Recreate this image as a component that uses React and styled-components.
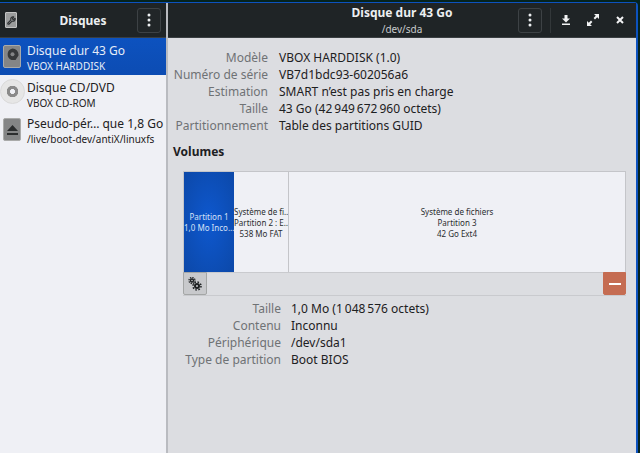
import React from 'react'
import styled, { createGlobalStyle } from 'styled-components'
import { Wrench } from 'lucide-react'

const GlobalStyle = createGlobalStyle`
  html, body {
    margin: 0;
    padding: 0;
    width: 640px;
    height: 453px;
    overflow: hidden;
    background: #05231e;
  }
  * { box-sizing: border-box; }
`

const Desktop = styled.div`
  width: 640px;
  height: 453px;
  padding: 2px 2px 0 0;
  background: #05231e;
`

const Window = styled.div`
  width: 638px;
  height: 451px;
  display: grid;
  grid-template-columns: 168px 1fr;
  border-top: 1px solid #0d52bf;
  border-right: 2px solid #0d52bf;
  border-radius: 0 4px 0 0;
  font-family: "Noto Sans", "Open Sans", sans-serif;
  font-size: 13px;
  color: #1d2022;
`

const Sidebar = styled.aside`
  background: #eff0f5;
  border-right: 2px solid #b9bbc0;
  display: flex;
  flex-direction: column;
`

const Main = styled.main`
  display: flex;
  flex-direction: column;
  background: #dcdde1;
`

const HeaderBar = styled.header`
  height: 35px;
  flex: none;
  background: #1f2426;
  border-bottom: 1px solid #3a3f42;
  color: #eceff1;
  display: grid;
  grid-template-columns: 1fr auto 1fr;
  align-items: center;
`

const HeaderSide = styled.div`
  display: flex;
  align-items: center;
  justify-content: ${p => p.$end ? 'flex-end' : 'flex-start'};
  padding: ${p => p.$pad};
`

const IconChip = styled.div`
  width: 12px;
  height: 16px;
  background: #9a9c9c;
  border: 1px solid #c2c3c3;
  border-radius: 1px;
  color: #2d3032;
  display: flex;
  align-items: center;
  justify-content: center;
`

const SideTitle = styled.div`
  font-size: 12px;
  font-weight: 700;
`

const MenuButton = styled.button`
  width: 24px;
  height: 25px;
  background: #212628;
  border: 1px solid #3d4245;
  border-radius: 3px;
  padding: 0;
  display: flex;
  align-items: center;
  justify-content: center;
`

const DiskRow = styled.div`
  height: 36.5px;
  padding: 4px 0 0 3px;
  display: flex;
  gap: 6px;
  background: ${p => p.$active ? 'linear-gradient(180deg, #0d52bf, #0c4cb3)' : 'transparent'};
  color: ${p => p.$active ? '#e6edf8' : '#1d2022'};
`

const DiskText = styled.div`
  min-width: 0;
  white-space: nowrap;
`

const DiskName = styled.div`
  font-size: 12px;
  line-height: 17px;
`

const DiskSub = styled.div`
  font-size: 10px;
  line-height: 14px;
`

const DiskIconBox = styled.div`
  width: 18px;
  height: 23px;
  margin-top: 3px;
  padding-top: ${p => p.$top}px;
  background: #848586;
  border: 1px solid #a9aaa9;
  border-radius: 2px;
  flex: none;
  display: flex;
  align-items: flex-start;
  justify-content: center;
`

const CdIcon = styled.div`
  width: 25px;
  height: 25px;
  margin: 0 -4px 0 -3px;
  flex: none;
  border-radius: 50%;
  background: radial-gradient(circle, #eff0f5 0 2.2px, #8a8a8a 2.8px 5.5px, #e6e6e6 6px);
  border: 1px solid #d9d9d9;
`

const TitleBlock = styled.div`
  text-align: center;
`

const WinTitle = styled.div`
  font-size: 12px;
  font-weight: 700;
  line-height: 16px;
  margin-bottom: 2px;
`

const WinSub = styled.div`
  font-size: 10px;
  line-height: 13px;
  color: #c8cbcd;
`

const Sep = styled.div`
  width: 1px;
  height: 25px;
  background: #33383a;
  margin: 0 8px;
`

const WinAction = styled.div`
  width: 14px;
  height: 14px;
  margin-right: ${p => p.$gap}px;
  display: flex;
  align-items: center;
  justify-content: center;
`

const Content = styled.div`
  flex: 1;
  padding: 11px 0 0 5px;
  display: flex;
  flex-direction: column;
`

const InfoGrid = styled.dl`
  margin: ${p => p.$margin};
  display: grid;
  grid-template-columns: ${p => p.$label}px 1fr;
  column-gap: ${p => p.$gap}px;
  font-size: 12px;
  line-height: 17px;
`

const Label = styled.dt`
  text-align: right;
  color: #6f7275;
  white-space: nowrap;
`

const Value = styled.dd`
  margin: 0;
  color: #1d2022;
  white-space: nowrap;
`

const SectionTitle = styled.div`
  font-size: 12px;
  font-weight: 700;
  line-height: 17px;
  margin: 9px 0 11px;
`

const VolumeFrame = styled.div`
  margin-left: 10px;
  height: 101px;
  width: 443px;
  border: 1px solid #c4c5c9;
  border-bottom: none;
  display: flex;
  background: #eff0f5;
`

const Partition = styled.div`
  width: ${p => p.$width ? `${p.$width}px` : 'auto'};
  flex: ${p => p.$width ? 'none' : 1};
  height: 100%;
  display: flex;
  flex-direction: column;
  justify-content: center;
  text-align: center;
  font-size: 8px;
  line-height: 11px;
  white-space: nowrap;
  overflow: hidden;
  color: ${p => p.$selected ? '#d6e2f7' : '#2a2d2f'};
  background: ${p => p.$selected
    ? 'radial-gradient(ellipse at center, #0e58cf, #0c48a8)'
    : '#eff0f5'};
  border-right: ${p => p.$selected || p.$last ? 'none' : '1px solid #c4c5c9'};
`

const VolumeTools = styled.div`
  margin-left: 10px;
  width: 443px;
  height: 24px;
  display: flex;
  justify-content: space-between;
  background: #dcdde1;
  border-top: 1px solid #c9cace;
  border-bottom: 1px solid #c9cace;
`

const ToolButton = styled.button`
  width: ${p => p.$w}px;
  height: 23px;
  margin-top: -1px;
  padding: 0;
  display: flex;
  align-items: center;
  justify-content: center;
  border: 1px solid ${p => p.$danger ? '#c56c52' : '#a4a6a6'};
  border-radius: 0 0 2px 2px;
  background: ${p => p.$danger ? '#c56c52' : '#c8c9cc'};
`

const MinusBar = styled.span`
  display: block;
  width: 12px;
  height: 2px;
  background: #fff;
`

const Dots = () => (
  <svg width="4" height="14" viewBox="0 0 4 14">
    <circle cx="2" cy="2" r="1.5" fill="#eceff1" />
    <circle cx="2" cy="7" r="1.5" fill="#eceff1" />
    <circle cx="2" cy="12" r="1.5" fill="#eceff1" />
  </svg>
)

const HddGlyph = () => (
  <svg width="13" height="13" viewBox="0 0 13 13">
    <path d="M6.500 0.500a6 6 0 0 1 6 6v1l-3 4.500H5.500A6 6 0 0 1 6.500 0.500z" fill="#37393a" />
    <circle cx="6.500" cy="6.300" r="2" fill="#848586" />
  </svg>
)

const EjectGlyph = () => (
  <svg width="11" height="10" viewBox="0 0 11 10">
    <path d="M5.500 0l5.500 6H0z M0 8h11v2H0z" fill="#2b2d2e" />
  </svg>
)

const DownloadGlyph = () => (
  <svg width="8" height="10" viewBox="0 0 8 10">
    <path d="M2.500 0h3v3.500H8L4 7.500 0 3.500h2.500z M0 8.500h8V10H0z" fill="#f2f3f4" />
  </svg>
)

const ExpandGlyph = () => (
  <svg width="12" height="12" viewBox="0 0 12 12">
    <path d="M7 0h5v5l-1.800-1.800L8 5.400 6.600 4 8.800 1.800z M5 12H0V7l1.800 1.800L4 6.600 5.400 8 3.200 10.200z" fill="#f2f3f4" />
  </svg>
)

const CloseGlyph = () => (
  <svg width="8" height="8" viewBox="0 0 8 8">
    <path d="M1 1l6 6M7 1L1 7" stroke="#f2f3f4" strokeWidth="2" />
  </svg>
)

const GearsGlyph = () => (
  <svg width="14" height="14" viewBox="0 0 14 14">
    <circle cx="4" cy="3.500" r="1.500" fill="none" stroke="#1d2022" strokeWidth="1.400" />
    <circle cx="4" cy="3.500" r="3" fill="none" stroke="#1d2022" strokeWidth="1.300" strokeDasharray="1.300 1.050" />
    <circle cx="9" cy="9" r="2" fill="none" stroke="#1d2022" strokeWidth="2" />
    <circle cx="9" cy="9" r="4" fill="none" stroke="#1d2022" strokeWidth="1.500" strokeDasharray="1.600 1.540" />
  </svg>
)

const disks = [
  { name: 'Disque dur 43 Go', sub: 'VBOX HARDDISK', kind: 'hdd', active: true },
  { name: 'Disque CD/DVD', sub: 'VBOX CD-ROM', kind: 'cd' },
  { name: 'Pseudo-pér… que 1,8 Go', sub: '/live/boot-dev/antiX/linuxfs', kind: 'loop' },
]

const driveInfo = [
  ['Modèle', 'VBOX HARDDISK (1.0)'],
  ['Numéro de série', 'VB7d1bdc93-602056a6'],
  ['Estimation', 'SMART n’est pas pris en charge'],
  ['Taille', '43 Go (42\u2009949\u2009672\u2009960 octets)'],
  ['Partitionnement', 'Table des partitions GUID'],
]

const partInfo = [
  ['Taille', '1,0 Mo (1\u2009048\u2009576 octets)'],
  ['Contenu', 'Inconnu'],
  ['Périphérique', '/dev/sda1'],
  ['Type de partition', 'Boot BIOS'],
]

const App = () => (
  <Desktop>
    <GlobalStyle />
    <Window>
      <Sidebar>
        <HeaderBar>
          <HeaderSide $pad="0 0 0 5px">
            <IconChip><Wrench size={9} strokeWidth={3} /></IconChip>
          </HeaderSide>
          <SideTitle>Disques</SideTitle>
          <HeaderSide $end $pad="0 5px 0 0">
            <MenuButton><Dots /></MenuButton>
          </HeaderSide>
        </HeaderBar>
        {disks.map(d => (
          <DiskRow key={d.name} $active={d.active}>
            {d.kind === 'cd' ? <CdIcon /> : (
              <DiskIconBox $top={d.kind === 'hdd' ? 2 : 6}>
                {d.kind === 'hdd' ? <HddGlyph /> : <EjectGlyph />}
              </DiskIconBox>
            )}
            <DiskText>
              <DiskName>{d.name}</DiskName>
              <DiskSub>{d.sub}</DiskSub>
            </DiskText>
          </DiskRow>
        ))}
      </Sidebar>
      <Main>
        <HeaderBar>
          <div />
          <TitleBlock>
            <WinTitle>Disque dur 43 Go</WinTitle>
            <WinSub>/dev/sda</WinSub>
          </TitleBlock>
          <HeaderSide $end $pad="0 9px 0 0">
            <MenuButton><Dots /></MenuButton>
            <Sep />
            <WinAction $gap={13}><DownloadGlyph /></WinAction>
            <WinAction $gap={13}><ExpandGlyph /></WinAction>
            <WinAction $gap={0}><CloseGlyph /></WinAction>
          </HeaderSide>
        </HeaderBar>
        <Content>
          <InfoGrid $label={95} $gap={11} $margin="0">
            {driveInfo.map(([k, v]) => (
              <React.Fragment key={k}>
                <Label>{k}</Label>
                <Value>{v}</Value>
              </React.Fragment>
            ))}
          </InfoGrid>
          <SectionTitle>Volumes</SectionTitle>
          <VolumeFrame>
            <Partition $width={50} $selected>
              <div>Partition 1</div>
              <div>1,0 Mo Inco…</div>
            </Partition>
            <Partition $width={55}>
              <div>Système de fi…</div>
              <div>Partition 2 : E…</div>
              <div>538 Mo FAT</div>
            </Partition>
            <Partition $last>
              <div>Système de fichiers</div>
              <div>Partition 3</div>
              <div>42 Go Ext4</div>
            </Partition>
          </VolumeFrame>
          <VolumeTools>
            <ToolButton $w={24}><GearsGlyph /></ToolButton>
            <ToolButton $w={23} $danger><MinusBar /></ToolButton>
          </VolumeTools>
          <InfoGrid $label={97} $gap={10} $margin="4px 0 0 11px">
            {partInfo.map(([k, v]) => (
              <React.Fragment key={k}>
                <Label>{k}</Label>
                <Value>{v}</Value>
              </React.Fragment>
            ))}
          </InfoGrid>
        </Content>
      </Main>
    </Window>
  </Desktop>
)

export default App
